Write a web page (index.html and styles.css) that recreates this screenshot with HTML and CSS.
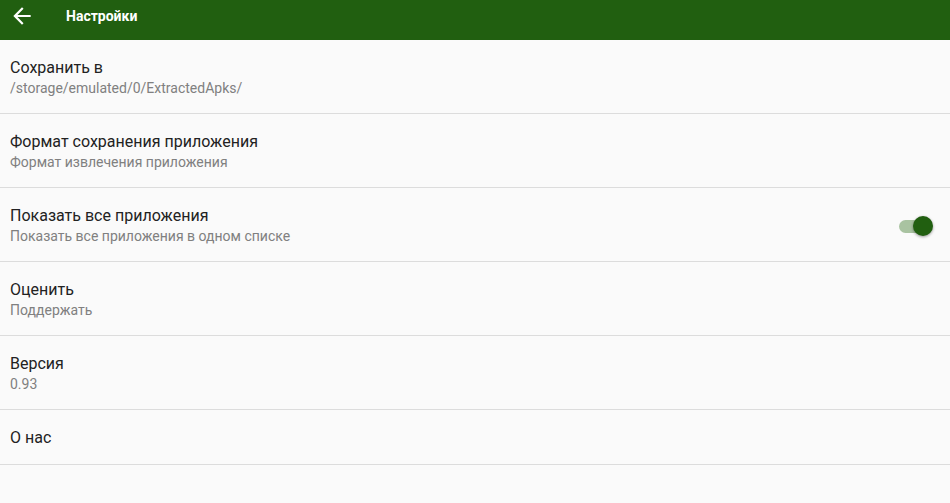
FILE: index.html
```html
<!DOCTYPE html>
<html lang="ru">
<head>
<meta charset="utf-8">
<link rel="stylesheet" href="styles.css">
</head>
<body>
<header class="toolbar">
  <svg class="back" width="26" height="26" viewBox="0 0 24 24"><path d="M20 11H7.83l5.59-5.59L12 4l-8 8 8 8 1.41-1.41L7.83 13H20v-2z" fill="#fff"/></svg>
  <span class="title">Настройки</span>
</header>
<main class="list">
  <div class="row">
    <div class="texts"><div class="t">Сохранить в</div><div class="s">/storage/emulated/0/ExtractedApks/</div></div>
  </div>
  <div class="row">
    <div class="texts"><div class="t">Формат сохранения приложения</div><div class="s">Формат извлечения приложения</div></div>
  </div>
  <div class="row">
    <div class="texts"><div class="t">Показать все приложения</div><div class="s">Показать все приложения в одном списке</div></div>
    <div class="switch"><div class="track"></div><div class="thumb"></div></div>
  </div>
  <div class="row">
    <div class="texts"><div class="t">Оценить</div><div class="s">Поддержать</div></div>
  </div>
  <div class="row">
    <div class="texts"><div class="t">Версия</div><div class="s">0.93</div></div>
  </div>
  <div class="row short">
    <div class="texts"><div class="t">О нас</div></div>
  </div>
</main>
</body>
</html>
```
FILE: styles.css
```css
html, body { margin: 0; padding: 0; }
body {
  background: #fafafa;
  font-family: Roboto, "Liberation Sans", sans-serif;
  width: 950px;
  height: 503px;
  overflow: hidden;
}
.toolbar {
  height: 40px;
  background: #215f10;
  display: flex;
  align-items: center;
  padding-left: 9px;
  box-sizing: border-box;
}
.back { display: block; margin-top: -9px; }
.title {
  color: #fff;
  font-weight: 700;
  font-size: 14px;
  margin-left: 31px;
  margin-top: -8px;
}
.row {
  height: 73px;
  border-bottom: 1px solid #dcdcdc;
  display: flex;
  align-items: center;
  padding: 0 15px 0 10px;
}
.row.short { height: 54px; }
.texts { flex: 1; padding-top: 1px; }
.t { font-size: 16px; line-height: 20px; color: #222; }
.s { font-size: 14px; line-height: 17px; color: #808080; margin-top: 2px; }
.switch { position: relative; width: 36px; height: 22px; }
.track {
  position: absolute; left: 0; top: 6px; width: 32px; height: 13px;
  border-radius: 7px; background: #a9c3a1;
}
.thumb {
  position: absolute; left: 14px; top: 2px; width: 20px; height: 20px;
  border-radius: 50%; background: #215f10;
  box-shadow: 0 1px 3px rgba(0,0,0,0.4);
}
```
